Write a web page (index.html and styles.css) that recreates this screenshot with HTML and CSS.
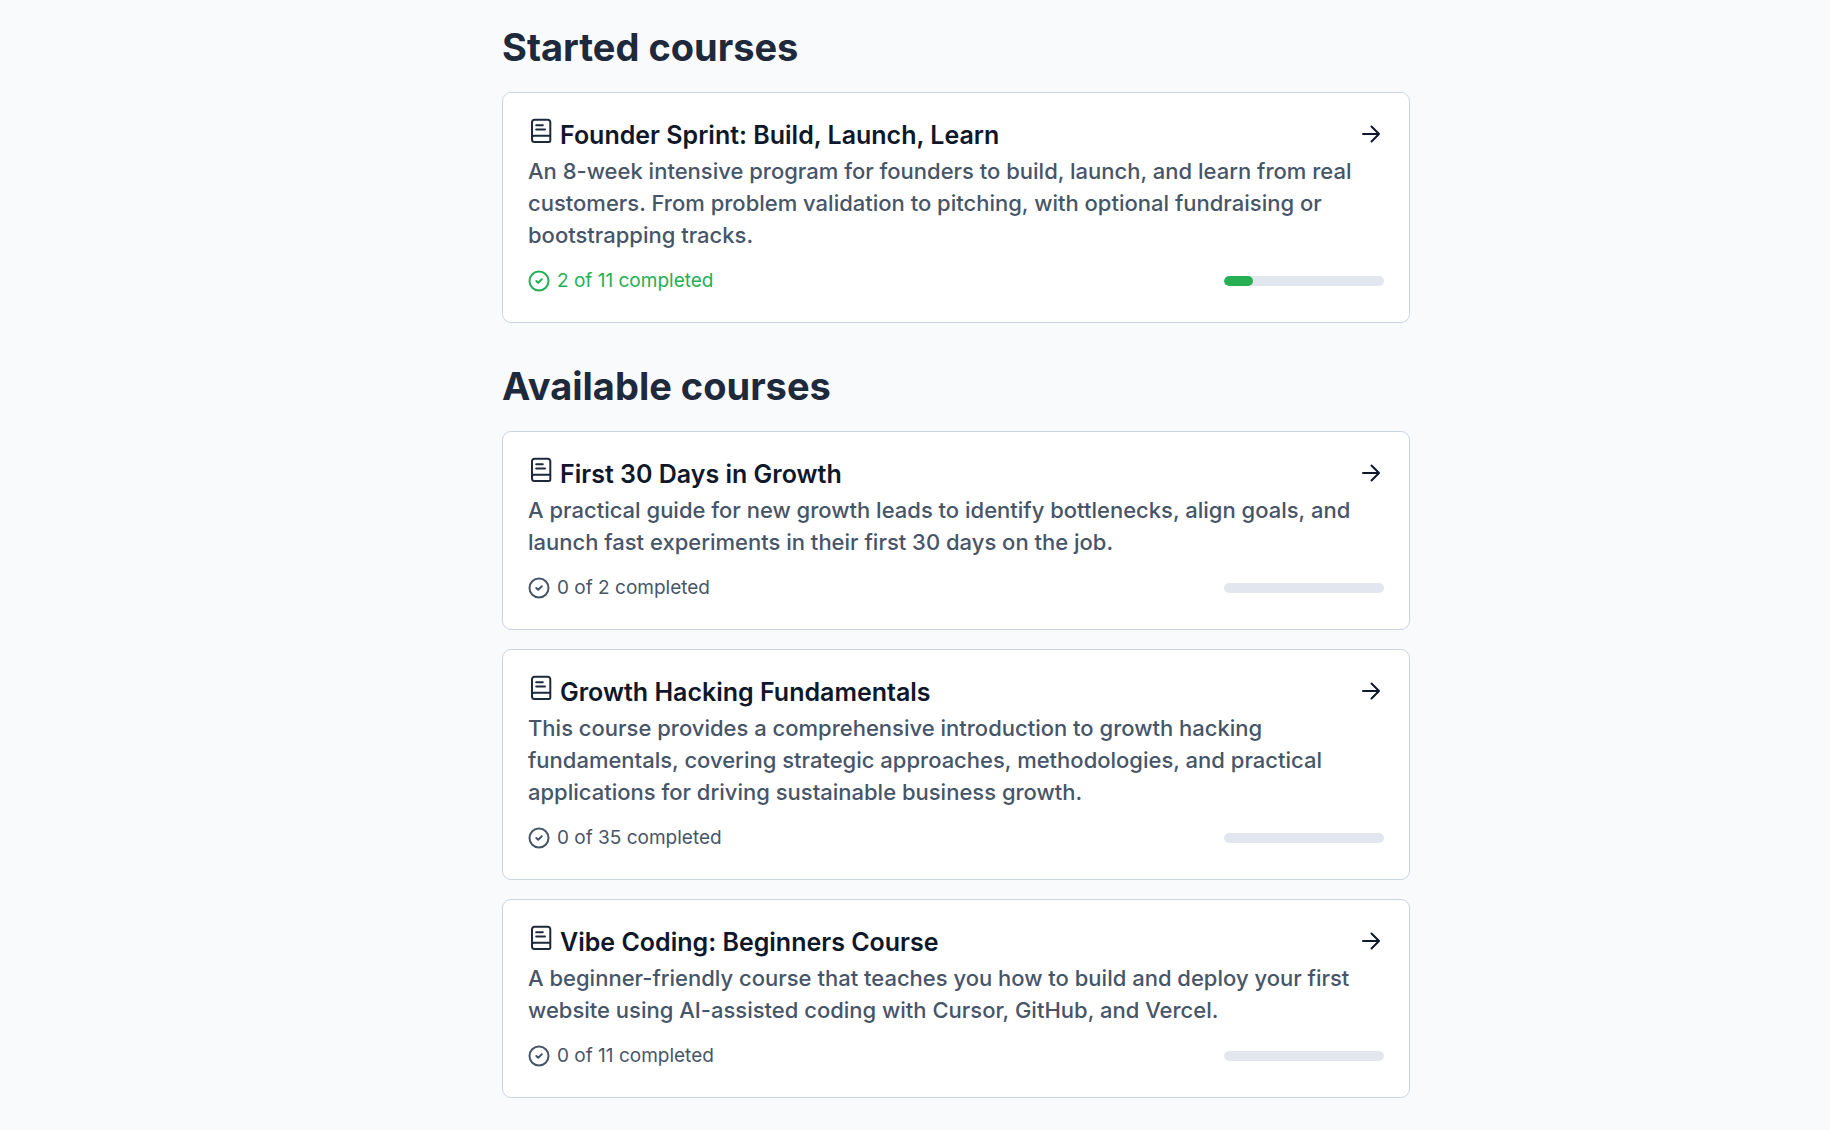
FILE: index.html
```html
<!DOCTYPE html>
<html lang="en">
<head>
<meta charset="utf-8">
<meta name="viewport" content="width=device-width, initial-scale=1">
<title>Courses</title>
<link rel="stylesheet" href="styles.css">
</head>
<body>
<svg class="sprite" aria-hidden="true">
  <symbol id="icon-book" viewBox="0 0 26 26">
    <path d="M22.300 17.800V4.300A2.500 2.500 0 0 0 19.800 1.800H6.500A2.500 2.500 0 0 0 4 4.300V21.500A2.500 2.500 0 0 0 6.500 24H20.800A1.500 1.500 0 0 0 22.300 22.500V17.800H6A2 2 0 0 0 4 19.800M8.200 7.300H14.800M8.200 11.400H17"/>
  </symbol>
  <symbol id="icon-arrow" viewBox="0 0 20 20">
    <path d="M2 10H18M10.500 2.500L18 10L10.500 17.500"/>
  </symbol>
  <symbol id="icon-check" viewBox="0 0 22 22">
    <circle cx="11" cy="11" r="9.500"/>
    <path d="M8.300 11L10.200 12.700L13.800 9.300"/>
  </symbol>
</svg>
<main class="page">
  <section class="section">
    <h2 class="section-title">Started courses</h2>
    <a class="card" href="#founder-sprint">
      <div class="card-head">
        <svg class="book"><use href="#icon-book"/></svg>
        <h3 class="card-title">Founder Sprint: Build, Launch, Learn</h3>
        <svg class="arrow"><use href="#icon-arrow"/></svg>
      </div>
      <p class="card-text">An 8-week intensive program for founders to build, launch, and learn from real customers. From problem validation to pitching, with optional fundraising or bootstrapping tracks.</p>
      <div class="card-foot">
        <span class="status status-active"><svg class="check"><use href="#icon-check"/></svg>2 of 11 completed</span>
        <div class="track"><div class="fill" style="width: 18.18%"></div></div>
      </div>
    </a>
  </section>
  <section class="section">
    <h2 class="section-title">Available courses</h2>
    <a class="card" href="#first-30-days">
      <div class="card-head">
        <svg class="book"><use href="#icon-book"/></svg>
        <h3 class="card-title">First 30 Days in Growth</h3>
        <svg class="arrow"><use href="#icon-arrow"/></svg>
      </div>
      <p class="card-text">A practical guide for new growth leads to identify bottlenecks, align goals, and launch fast experiments in their first 30 days on the job.</p>
      <div class="card-foot">
        <span class="status"><svg class="check"><use href="#icon-check"/></svg>0 of 2 completed</span>
        <div class="track"></div>
      </div>
    </a>
    <a class="card" href="#growth-hacking">
      <div class="card-head">
        <svg class="book"><use href="#icon-book"/></svg>
        <h3 class="card-title">Growth Hacking Fundamentals</h3>
        <svg class="arrow"><use href="#icon-arrow"/></svg>
      </div>
      <p class="card-text">This course provides a comprehensive introduction to growth hacking fundamentals, covering strategic approaches, methodologies, and practical applications for driving sustainable business growth.</p>
      <div class="card-foot">
        <span class="status"><svg class="check"><use href="#icon-check"/></svg>0 of 35 completed</span>
        <div class="track"></div>
      </div>
    </a>
    <a class="card" href="#vibe-coding">
      <div class="card-head">
        <svg class="book"><use href="#icon-book"/></svg>
        <h3 class="card-title">Vibe Coding: Beginners Course</h3>
        <svg class="arrow"><use href="#icon-arrow"/></svg>
      </div>
      <p class="card-text">A beginner-friendly course that teaches you how to build and deploy your first website using AI-assisted coding with Cursor, GitHub, and Vercel.</p>
      <div class="card-foot">
        <span class="status"><svg class="check"><use href="#icon-check"/></svg>0 of 11 completed</span>
        <div class="track"></div>
      </div>
    </a>
  </section>
</main>
</body>
</html>
```
FILE: styles.css
```css
* {
  box-sizing: border-box;
}

body {
  margin: 0;
  background: #f8fafc;
  color: #0f172a;
  font-family: Inter, "Liberation Sans", sans-serif;
}

.sprite {
  display: none;
}

svg {
  flex: none;
  fill: none;
  stroke: currentColor;
  stroke-width: 2;
  stroke-linecap: round;
  stroke-linejoin: round;
}

.page {
  display: flex;
  flex-direction: column;
  align-items: center;
  gap: 39px;
  padding: 23px 0 24px 82px;
}

.section {
  display: flex;
  flex-direction: column;
  gap: 19px;
  width: 100%;
  max-width: 908px;
}

.section-title {
  margin: 0 0 2px;
  color: #1e293b;
  font-size: 38px;
  line-height: 48px;
  font-weight: 700;
}

.card {
  display: block;
  padding: 25px 25px 27px;
  border: 1px solid #cbd5e1;
  border-radius: 9px;
  background: #fff;
  color: inherit;
  text-decoration: none;
}

.card-head {
  display: flex;
  align-items: flex-start;
  gap: 6px;
  padding-bottom: 3px;
}

.book {
  width: 26px;
  height: 26px;
  color: #1e293b;
}

.card-title {
  flex: 1;
  margin: 0;
  font-size: 25px;
  line-height: 34px;
  font-weight: 600;
}

.arrow {
  width: 20px;
  height: 20px;
  margin: 6px 3px 0 0;
}

.card-text {
  margin: 0;
  color: #475569;
  font-size: 22px;
  line-height: 32px;
  font-weight: 500;
}

.card-foot {
  display: flex;
  align-items: center;
  justify-content: space-between;
  padding-top: 16px;
}

.status {
  display: flex;
  align-items: center;
  gap: 7px;
  color: #475569;
  font-size: 19px;
  line-height: 28px;
}

.status-active {
  color: #22b055;
}

.check {
  width: 22px;
  height: 22px;
}

.track {
  width: 160px;
  height: 10px;
  border-radius: 5px;
  background: #e2e6ee;
  overflow: hidden;
}

.fill {
  height: 100%;
  border-radius: 5px;
  background: #26b053;
}
```
